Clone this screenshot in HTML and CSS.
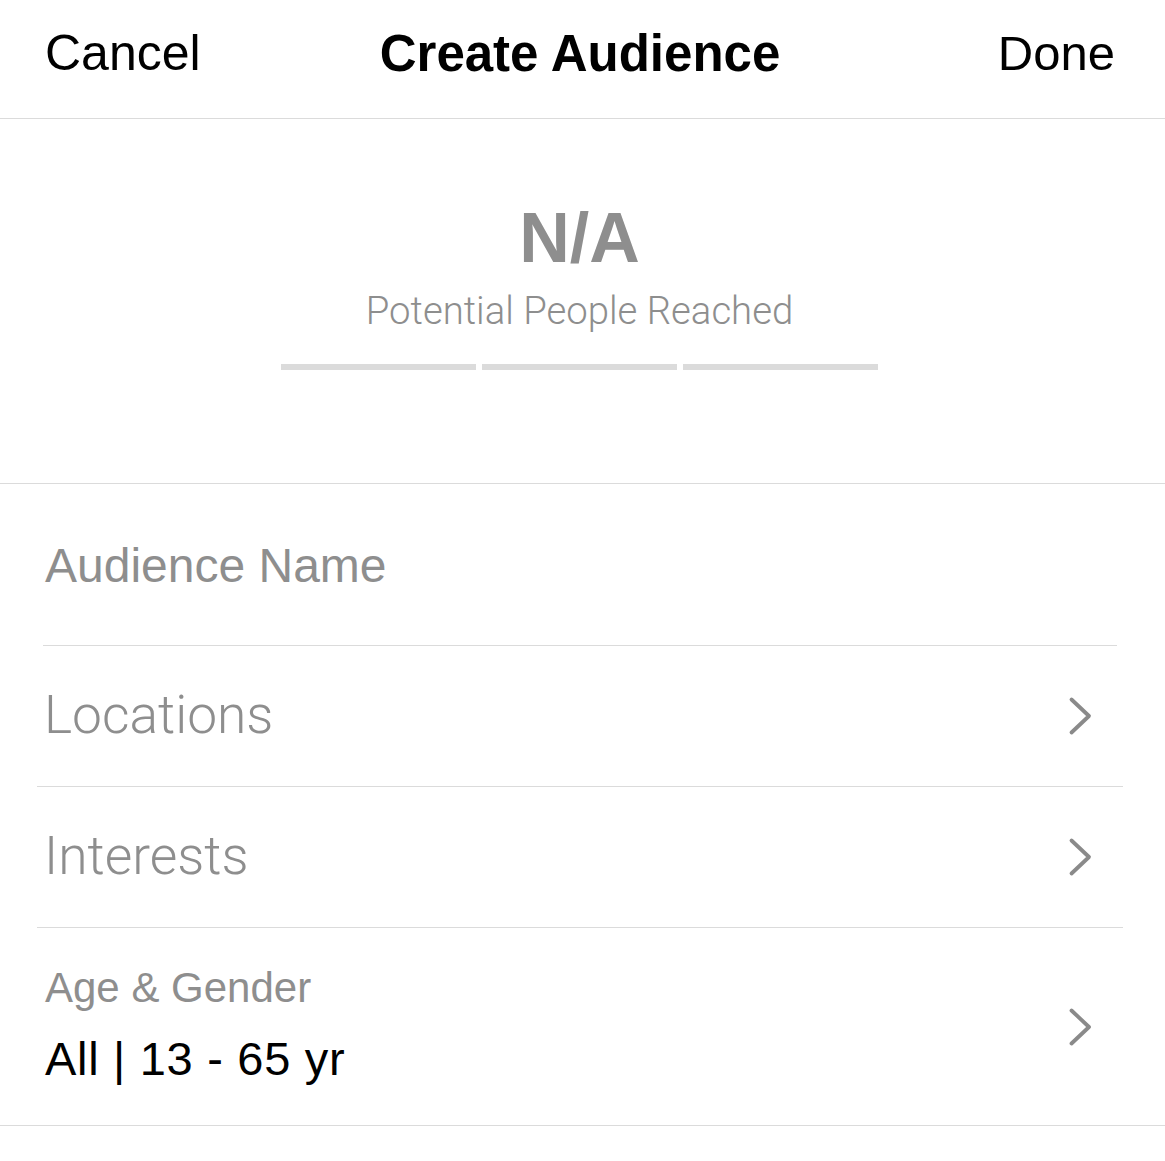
FILE: index.html
```html
<!DOCTYPE html>
<html>
<head>
<meta charset="utf-8">
<link rel="stylesheet" href="styles.css">
</head>
<body>
<div class="screen">
  <header class="nav">
    <span class="nav-left">Cancel</span>
    <span class="nav-title">Create Audience</span>
    <span class="nav-right">Done</span>
  </header>

  <section class="reach">
    <div class="reach-value">N/A</div>
    <div class="reach-label">Potential People Reached</div>
    <div class="reach-bars">
      <span class="bar"></span>
      <span class="bar"></span>
      <span class="bar"></span>
    </div>
  </section>

  <div class="list">
    <div class="row row-name">
      <span class="name-text">Audience Name</span>
    </div>
    <div class="row row-link">
      <span class="link-text">Locations</span>
      <svg class="chev" width="26" height="40" viewBox="0 0 26 40"><path d="M3.5 3.5 L21 20 L3.5 36.5" fill="none" stroke="#8a8a8a" stroke-width="3.8" stroke-linecap="round" stroke-linejoin="round"/></svg>
    </div>
    <div class="row row-link">
      <span class="link-text">Interests</span>
      <svg class="chev" width="26" height="40" viewBox="0 0 26 40"><path d="M3.5 3.5 L21 20 L3.5 36.5" fill="none" stroke="#8a8a8a" stroke-width="3.8" stroke-linecap="round" stroke-linejoin="round"/></svg>
    </div>
    <div class="row row-age">
      <div class="age-text">
        <div class="age-label">Age &amp; Gender</div>
        <div class="age-value">All | 13 - 65 yr</div>
      </div>
      <svg class="chev" width="26" height="40" viewBox="0 0 26 40"><path d="M3.5 3.5 L21 20 L3.5 36.5" fill="none" stroke="#8a8a8a" stroke-width="3.8" stroke-linecap="round" stroke-linejoin="round"/></svg>
    </div>
  </div>
</div>
</body>
</html>
```

FILE: styles.css
```css
* { box-sizing: border-box; }
html, body {
  margin: 0;
  padding: 0;
  background: #ffffff;
}
body {
  font-family: "Liberation Sans", Arial, sans-serif;
  color: #000;
}
.screen {
  width: 1165px;
}
.nav {
  height: 119px;
  border-bottom: 1px solid #dbdbdb;
  display: grid;
  grid-template-columns: 1fr auto 1fr;
  align-items: center;
  padding: 0 50px 12px 45px;
  font-size: 50px;
  line-height: 1;
}
.nav-left { justify-self: start; }
.nav-title { font-weight: bold; font-size: 51px; }
.nav-right { justify-self: end; font-size: 49px; }

.reach {
  height: 365px;
  border-bottom: 1px solid #dbdbdb;
  display: flex;
  flex-direction: column;
  align-items: center;
  padding: 84px 6px 0 0;
}
.reach-value {
  font-size: 70px;
  line-height: 1;
  font-weight: bold;
  color: #8e8e8e;
}
.reach-label {
  margin-top: 19px;
  font-family: Roboto, "Liberation Sans", sans-serif;
  font-weight: 300;
  font-size: 38.3px;
  line-height: 1;
  color: #8e8e8e;
}
.reach-bars {
  margin-top: 34px;
  width: 597px;
  display: flex;
  gap: 6px;
}
.bar {
  flex: 1;
  height: 6px;
  background: #dbdbdb;
}

.list {
  display: flex;
  flex-direction: column;
}
.row {
  display: flex;
  align-items: center;
  justify-content: space-between;
  border-bottom: 1px solid #dbdbdb;
}
.row-name {
  height: 162px;
  margin: 0 48px 0 43px;
  padding-left: 2px;
  padding-top: 2px;
}
.name-text {
  font-size: 48px;
  line-height: 1;
  color: #8e8e8e;
}
.row-link {
  height: 141px;
  margin: 0 42px 0 37px;
  padding: 0 29px 0 7px;
}
.link-text {
  font-family: Roboto, "Liberation Sans", sans-serif;
  font-weight: 300;
  font-size: 53.3px;
  line-height: 1;
  color: #8e8e8e;
}
.row-age {
  height: 198px;
  padding: 0 71px 0 45px;
}
.age-text {
  display: flex;
  flex-direction: column;
  gap: 26px;
  padding-bottom: 4px;
}
.age-label {
  font-size: 42px;
  line-height: 1;
  color: #8e8e8e;
}
.age-value {
  font-size: 47px;
  line-height: 1;
  letter-spacing: 0.7px;
  color: #000;
}
.chev {
  display: block;
  flex-shrink: 0;
}
```
